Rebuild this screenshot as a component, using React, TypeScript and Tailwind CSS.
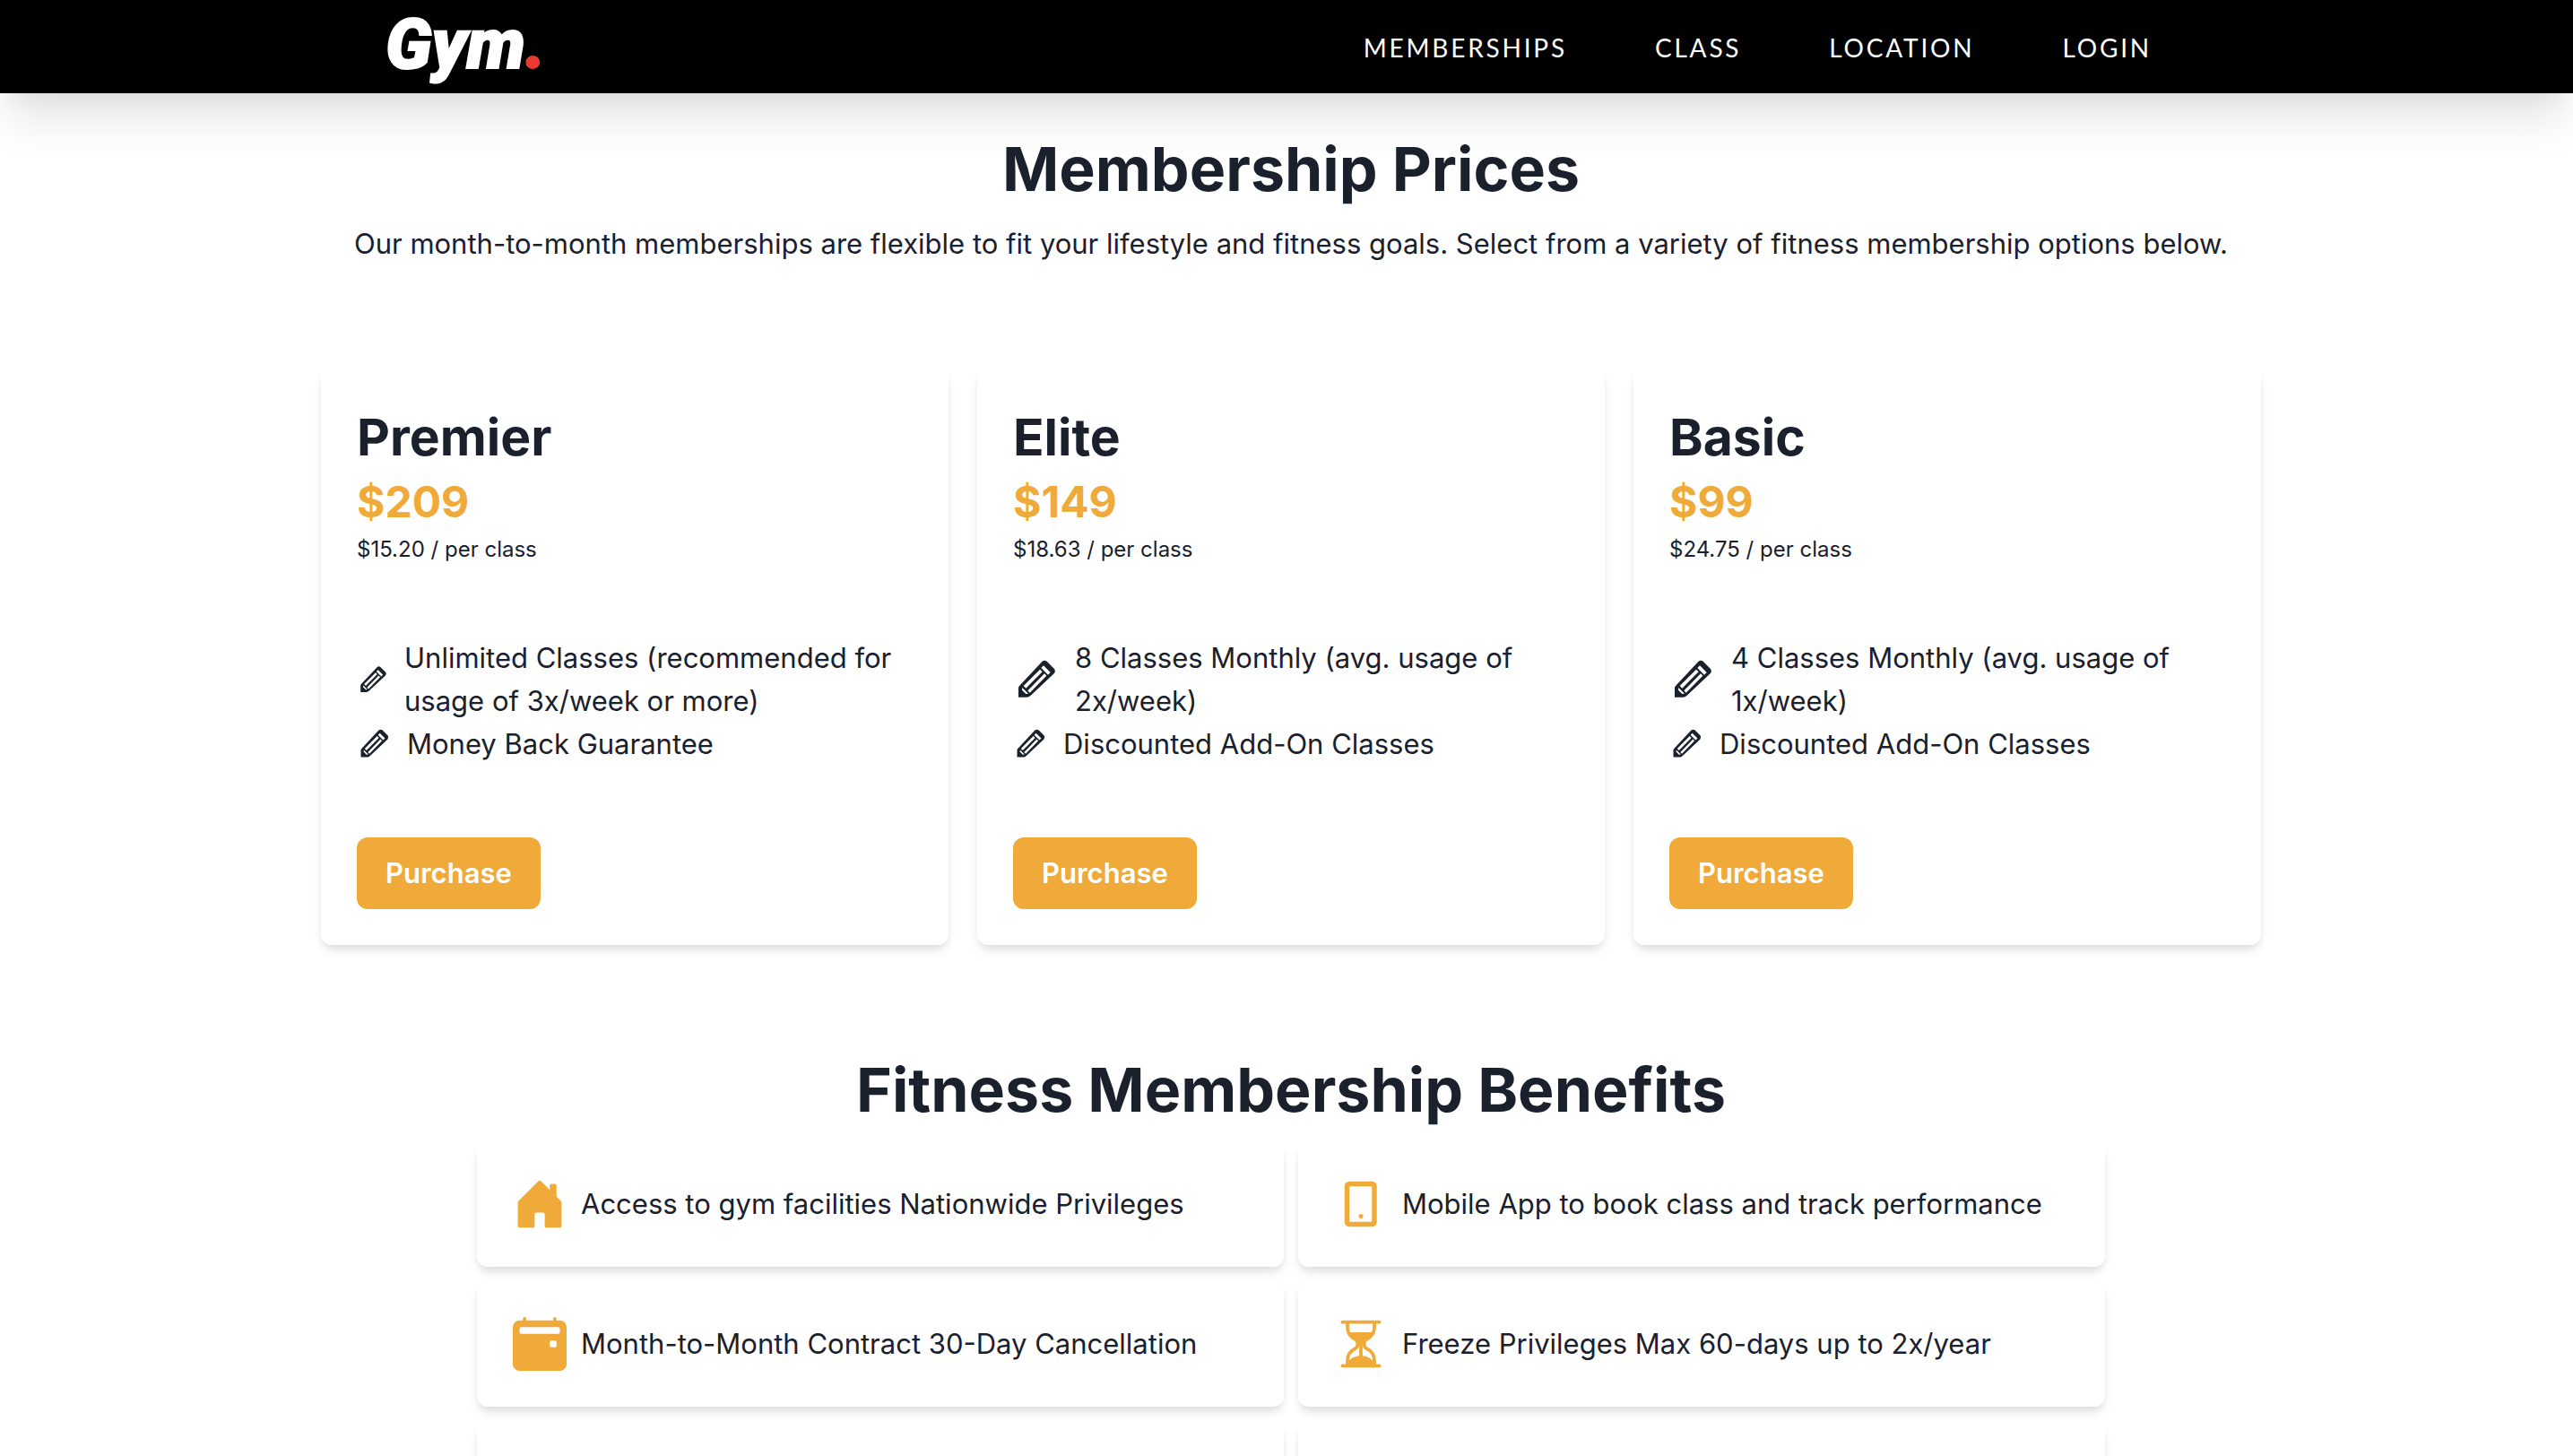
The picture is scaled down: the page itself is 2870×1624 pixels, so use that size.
import type { ReactNode } from "react";
import {
  BsCalendar2EventFill,
  BsHouseDoorFill,
  BsHourglassSplit,
} from "react-icons/bs";

type PencilSize = "small" | "medium" | "large";

interface Feature {
  text: string;
  pencil: PencilSize;
}

interface Plan {
  name: string;
  price: string;
  perClass: string;
  features: Feature[];
}

interface Benefit {
  text: string;
  icon: ReactNode;
}

const pencilClass: Record<PencilSize, string> = {
  small: "size-[37px] shrink-0",
  medium: "size-10 shrink-0",
  large: "size-[53px] shrink-0",
};

const navLinks = ["Memberships", "Class", "Location", "Login"];

const plans: Plan[] = [
  {
    name: "Premier",
    price: "$209",
    perClass: "$15.20 / per class",
    features: [
      {
        text: "Unlimited Classes (recommended for usage of 3x/week or more)",
        pencil: "small",
      },
      { text: "Money Back Guarantee", pencil: "medium" },
    ],
  },
  {
    name: "Elite",
    price: "$149",
    perClass: "$18.63 / per class",
    features: [
      { text: "8 Classes Monthly (avg. usage of 2x/week)", pencil: "large" },
      { text: "Discounted Add-On Classes", pencil: "medium" },
    ],
  },
  {
    name: "Basic",
    price: "$99",
    perClass: "$24.75 / per class",
    features: [
      { text: "4 Classes Monthly (avg. usage of 1x/week)", pencil: "large" },
      { text: "Discounted Add-On Classes", pencil: "medium" },
    ],
  },
];

function PencilIcon({ size }: { size: PencilSize }) {
  return (
    <svg
      viewBox="-18 -14 159 159"
      className={pencilClass[size]}
      fill="currentColor"
      fillRule="evenodd"
      aria-hidden="true"
    >
      <path d="M0 123V92Q0 88 4 84L79 4Q87-3 96 4L119 27Q126 35 119 44L41 117Q35 123 28 123ZM84 17L107 40L99 48L76 25ZM72 30L80 38L25 93L17 85ZM87 44L94 51L38 108L31 101ZM13 91L33 111L25 112L12 99Z" />
    </svg>
  );
}

function MobileIcon() {
  return (
    <svg viewBox="0 0 24 24" className="size-[60px]" aria-hidden="true">
      <rect
        x="5.8"
        y="3"
        width="12.2"
        height="18"
        rx="1"
        fill="none"
        stroke="currentColor"
        strokeWidth="2.2"
      />
      <circle cx="12" cy="17.4" r="1" fill="currentColor" />
    </svg>
  );
}

const benefits: Benefit[] = [
  {
    text: "Access to gym facilities Nationwide Privileges",
    icon: <BsHouseDoorFill className="size-[60px]" />,
  },
  {
    text: "Mobile App to book class and track performance",
    icon: <MobileIcon />,
  },
  {
    text: "Month-to-Month Contract 30-Day Cancellation",
    icon: <BsCalendar2EventFill className="size-[60px]" />,
  },
  {
    text: "Freeze Privileges Max 60-days up to 2x/year",
    icon: <BsHourglassSplit className="size-[60px]" />,
  },
];

const cardClass =
  "rounded-xl bg-white shadow-[0_8px_12px_-2px_rgba(0,0,0,0.1),0_4px_8px_-2px_rgba(0,0,0,0.06)]";

function Header() {
  return (
    <header className="bg-black pl-[10px] shadow-[0_40px_50px_-10px_rgba(0,0,0,0.1),0_20px_20px_-10px_rgba(0,0,0,0.04)]">
      <div className="mx-auto flex h-[104px] max-w-[2020px] items-center justify-between pr-[50px]">
        <a
          href="#"
          className="pb-1 font-[Roboto,sans-serif] text-[78px] leading-[80px] font-black text-white italic [-webkit-text-stroke:2px_currentColor]"
        >
          Gym<span className="text-[#ea3b2e]">.</span>
        </a>
        <nav className="flex gap-[98px] pt-0.5 font-[Lato,sans-serif] text-[28px] leading-[42px] tracking-widest text-white uppercase">
          {navLinks.map((label) => (
            <a key={label} href="#">
              {label}
            </a>
          ))}
        </nav>
      </div>
    </header>
  );
}

function PlanCard({ plan }: { plan: Plan }) {
  return (
    <article className={`${cardClass} flex flex-col items-start p-10`}>
      <h2 className="text-[57px] leading-[76px] font-bold">{plan.name}</h2>
      <p className="text-[48px] leading-[68px] font-bold text-[#f0aa3a]">
        {plan.price}
      </p>
      <p className="text-[24px] leading-[38px]">{plan.perClass}</p>
      <ul className="mt-[78px] mb-20">
        {plan.features.map((feature) => (
          <li key={feature.text} className="flex items-center gap-4">
            <PencilIcon size={feature.pencil} />
            <span>{feature.text}</span>
          </li>
        ))}
      </ul>
      <button
        type="button"
        className="h-20 rounded-xl bg-[#f0aa3a] px-8 font-semibold text-white"
      >
        Purchase
      </button>
    </article>
  );
}

export default function App() {
  return (
    <div className="h-screen overflow-hidden bg-white font-[Inter,sans-serif] text-[31px] leading-[48px] text-[#1a202c]">
      <Header />
      <main className="pl-[10px]">
        <section className="pt-11 text-center">
          <h1 className="text-[68px] leading-[80px] font-bold">
            Membership Prices
          </h1>
          <p className="mt-5">
            Our month-to-month memberships are flexible to fit your lifestyle
            and fitness goals. Select from a variety of fitness membership
            options below.
          </p>
        </section>

        <section className="mx-auto mt-[114px] grid max-w-[2164px] grid-cols-3 gap-8">
          {plans.map((plan) => (
            <PlanCard key={plan.name} plan={plan} />
          ))}
        </section>

        <section className="mt-[121px]">
          <h1 className="text-center text-[68px] leading-[80px] font-bold">
            Fitness Membership Benefits
          </h1>
          <div className="mx-auto mt-[18px] grid max-w-[1816px] grid-cols-2 gap-4">
            {benefits.map((benefit) => (
              <article
                key={benefit.text}
                className={`${cardClass} flex items-center gap-4 p-10`}
              >
                <span className="text-[#f0aa3a]">{benefit.icon}</span>
                <p>{benefit.text}</p>
              </article>
            ))}
            <article className={`${cardClass} min-h-[140px]`} />
            <article className={`${cardClass} min-h-[140px]`} />
          </div>
        </section>
      </main>
    </div>
  );
}
